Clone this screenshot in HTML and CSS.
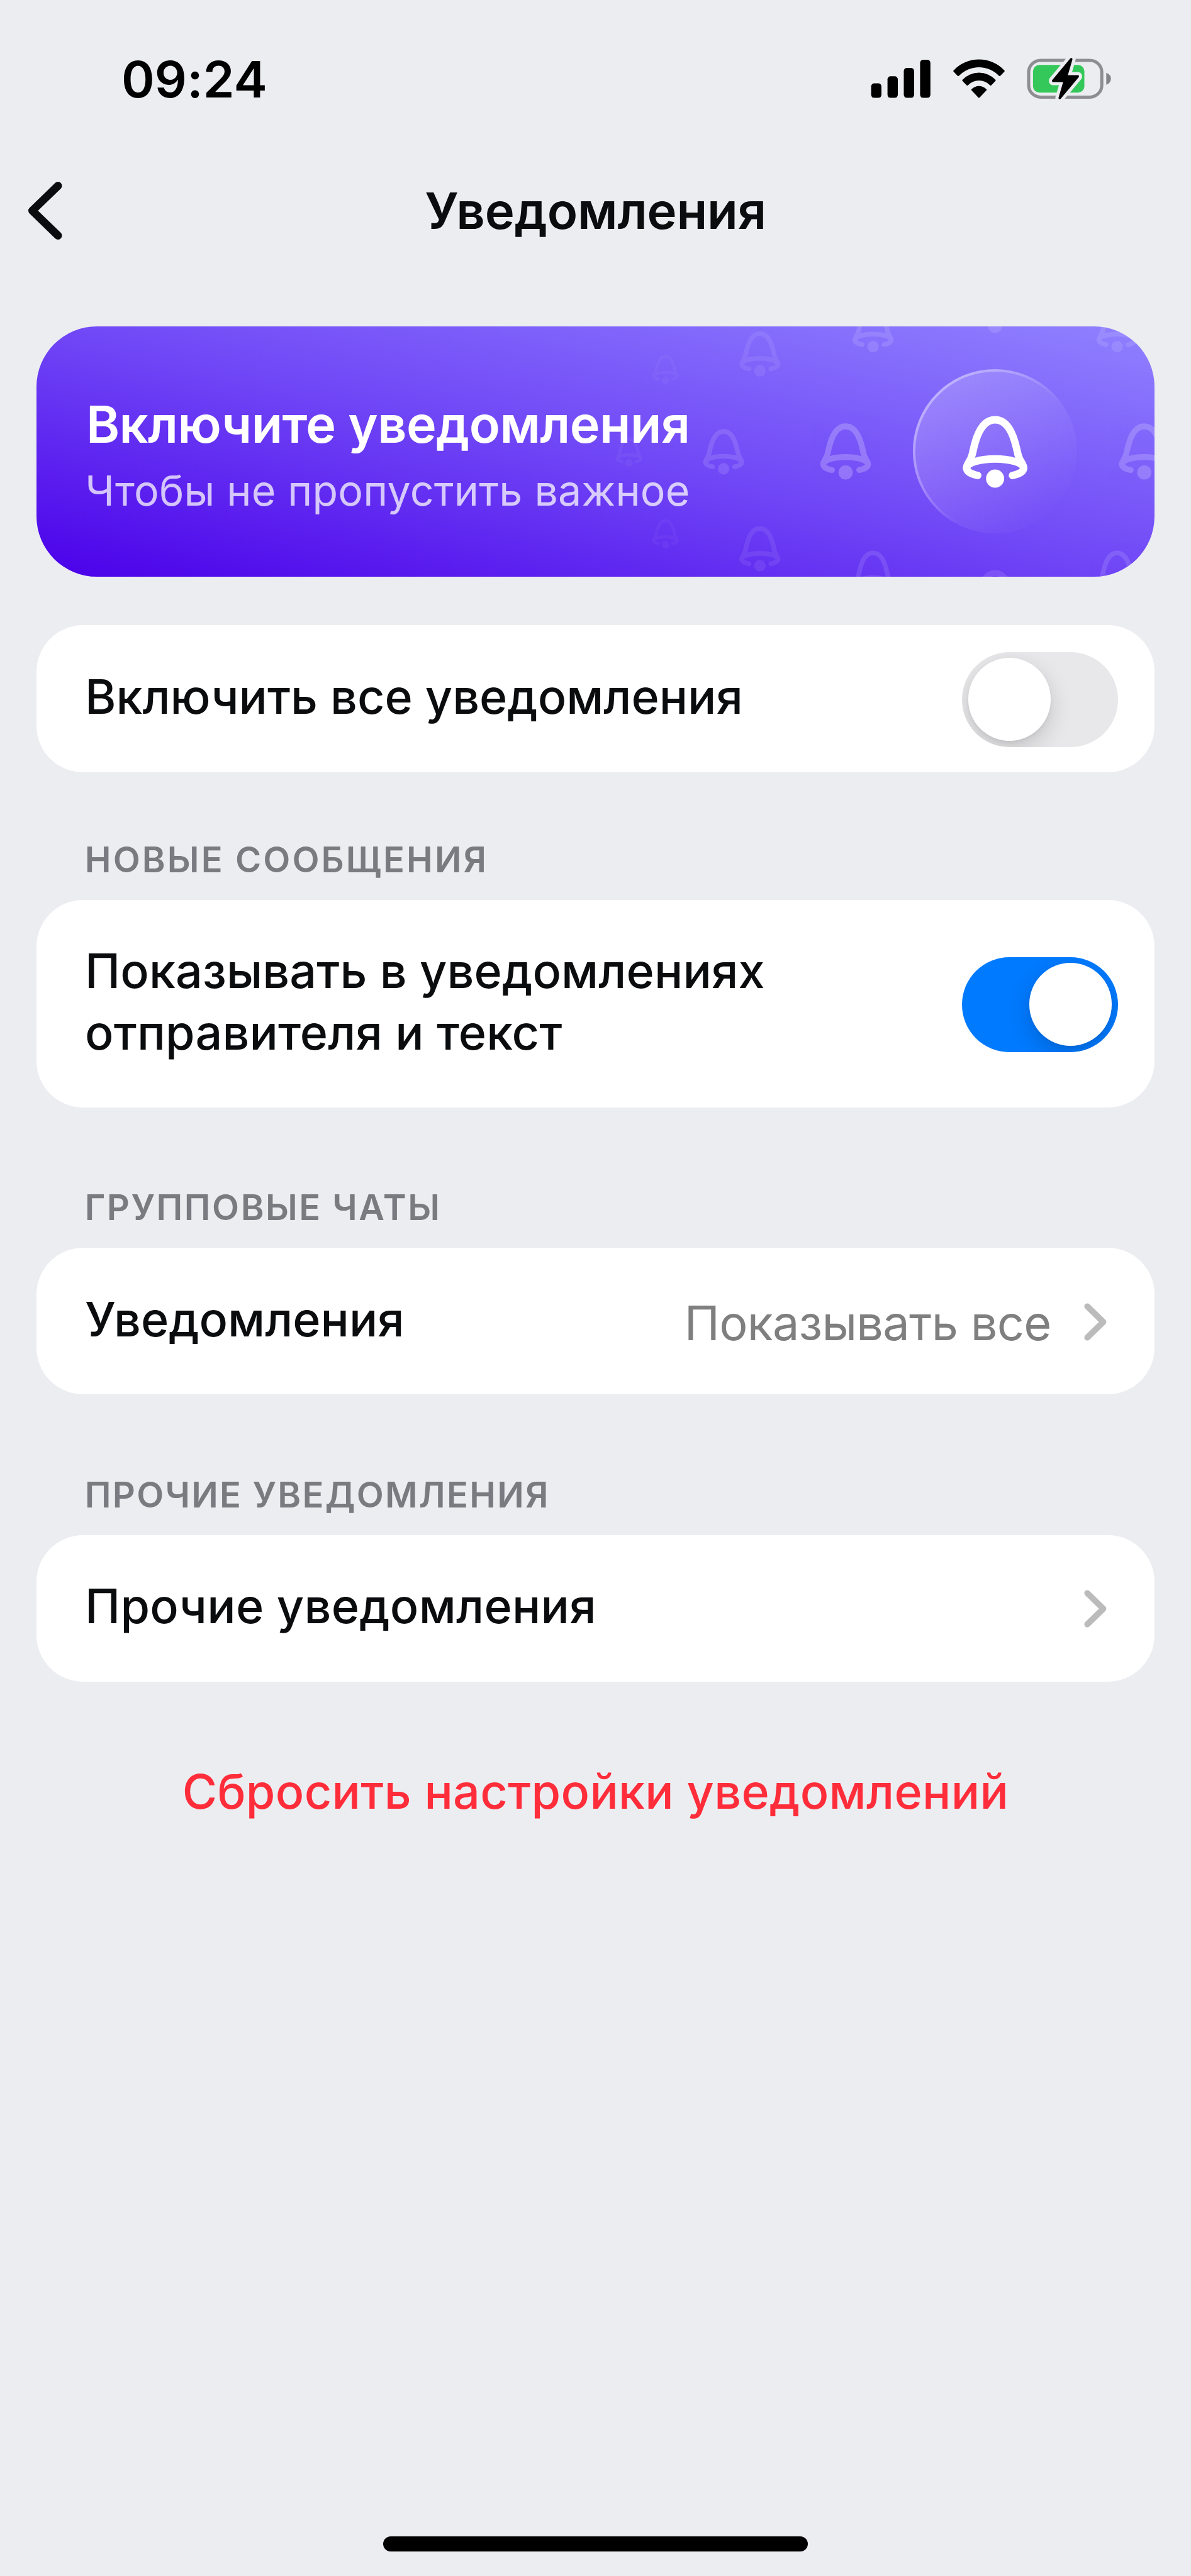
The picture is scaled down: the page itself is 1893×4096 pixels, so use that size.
FILE: index.html
```html
<!DOCTYPE html>
<html lang="ru">
<head>
<meta charset="utf-8">
<title>Уведомления</title>
<link rel="stylesheet" href="styles.css">
</head>
<body>
<div class="screen">
  <header class="status">
    <time class="status-time">09:24</time>
    <div class="status-icons">
      <svg class="icon-signal" width="95" height="62" viewBox="1384 94 95 62">
        <rect x="1384.6" y="132.5" width="16.4" height="23.1" rx="5"/>
        <rect x="1410.6" y="121.3" width="16.4" height="34.3" rx="5"/>
        <rect x="1436.5" y="108.1" width="16.4" height="47.5" rx="5"/>
        <rect x="1462.4" y="95" width="16.4" height="60.6" rx="5"/>
      </svg>
      <svg class="icon-wifi" width="82" height="62" viewBox="1514.7 94 82 62">
        <path d="M1515.4 111.9A55.2 55.2 0 0 1 1596 111.9Q1597 113 1596 114.1L1589.7 120.5Q1588.6 121.5 1587.4 120.5A44 44 0 0 0 1524 120.5Q1522.8 121.5 1521.7 120.5L1515.4 114.1Q1514.4 113 1515.4 111.9Z"/>
        <path d="M1529.5 126.7A36.5 36.5 0 0 1 1581.9 126.7Q1582.9 127.8 1581.9 128.8L1575.4 135.4Q1574.3 136.4 1573.2 135.4A24.5 24.5 0 0 0 1538.2 135.4Q1537.1 136.4 1536 135.4L1529.5 128.8Q1528.5 127.8 1529.5 126.7Z"/>
        <path d="M1543.9 141.8A16.5 16.5 0 0 1 1567.5 141.8Q1568.5 142.8 1567.5 143.8L1556.8 155Q1555.7 156 1554.6 155L1543.9 143.8Q1542.9 142.8 1543.9 141.8Z"/>
      </svg>
      <svg class="icon-battery" width="134" height="68" viewBox="1632 91 134 68">
        <rect class="battery-shell" x="1635" y="96" width="116.2" height="58.4" rx="19"/>
        <rect class="battery-level" x="1641.9" y="103.3" width="81.6" height="43.9" rx="10"/>
        <path class="battery-nub" d="M1758.3 115.7Q1765.8 118.5 1765.8 125.3Q1765.8 132 1758.3 134.8Z"/>
        <path class="bolt-gap" d="M1702.6 94.2L1674 128.6H1692.4L1684.4 155.8L1713 121.4H1694.6Z"/>
        <path class="bolt" d="M1702.6 94.2L1674 128.6H1692.4L1684.4 155.8L1713 121.4H1694.6Z"/>
      </svg>
    </div>
  </header>

  <nav class="nav">
    <svg class="back" width="60" height="100" viewBox="0 0 60 100">
      <path d="M52.2 10.4L11.3 50L52.2 89.6"/>
    </svg>
    <h1 class="nav-title">Уведомления</h1>
  </nav>

  <main class="content">
    <section class="banner">
      <svg class="banner-art" viewBox="58 519 1777 398" preserveAspectRatio="none">
        <defs>
          <g id="bell">
            <path d="M-45.3 83C-45.3 75 -39.5 74 -36.3 61C-32 40 -24 6 0 6C24 6 32 40 36.3 61C39.5 74 45.3 75 45.3 83"/>
            <path d="M-27.6 94.6C-38 92.5 -45.3 88.5 -45.3 82.5C-45.3 74 -22 68.3 0 68.3C22 68.3 45.3 74 45.3 82.5C45.3 88.5 38 92.5 27.6 94.6"/>
            <circle cx="0" cy="99.6" r="14.4"/>
          </g>
          <linearGradient id="disc" x1="0.1" y1="0.15" x2="0.9" y2="0.85">
            <stop offset="0" stop-color="#fff" stop-opacity="0.2"/>
            <stop offset="1" stop-color="#fff" stop-opacity="0"/>
          </linearGradient>
          <linearGradient id="rim" x1="0.1" y1="0.15" x2="0.75" y2="0.7">
            <stop offset="0" stop-color="#fff" stop-opacity="0.38"/>
            <stop offset="0.35" stop-color="#fff" stop-opacity="0.24"/>
            <stop offset="0.75" stop-color="#fff" stop-opacity="0"/>
          </linearGradient>
        </defs>
        <use class="bell" href="#bell" transform="translate(1058.1 564) scale(.41)" opacity=".035"/>
        <use class="bell" href="#bell" transform="translate(1000.2 695.4) scale(.41)" opacity=".045"/>
        <use class="bell" href="#bell" transform="translate(1058.1 825.6) scale(.41)" opacity=".035"/>
        <use class="bell" href="#bell" transform="translate(1208.3 526.6) scale(.634)" opacity=".08"/>
        <use class="bell" href="#bell" transform="translate(1150.6 682.4) scale(.634)" opacity=".12"/>
        <use class="bell" href="#bell" transform="translate(1208.3 836.8) scale(.634)" opacity=".08"/>
        <use class="bell" href="#bell" transform="translate(1388.3 488) scale(.634)" opacity=".12"/>
        <use class="bell" href="#bell" transform="translate(1344.6 673.3) scale(.785)" opacity=".22"/>
        <use class="bell" href="#bell" transform="translate(1388.3 875.6) scale(.634)" opacity=".11"/>
        <use class="bell" href="#bell" transform="translate(1582.3 440) scale(.785)" opacity=".12"/>
        <use class="bell" href="#bell" transform="translate(1582.3 906.4) scale(.785)" opacity=".11"/>
        <use class="bell" href="#bell" transform="translate(1776.3 488) scale(.634)" opacity=".11"/>
        <use class="bell" href="#bell" transform="translate(1819.6 673.3) scale(.785)" opacity=".19"/>
        <use class="bell" href="#bell" transform="translate(1776.3 875.6) scale(.634)" opacity=".12"/>
        <circle cx="1582.1" cy="717.6" r="130.6" fill="url(#disc)"/>
        <circle cx="1582.1" cy="717.6" r="128.6" fill="none" stroke="url(#rim)" stroke-width="4"/>
        <use class="bell" href="#bell" transform="translate(1582.3 661.6)"/>
      </svg>
      <h2 class="banner-title">Включите уведомления</h2>
      <p class="banner-text">Чтобы не пропустить важное</p>
    </section>

    <section class="card card-first">
      <span class="label">Включить все уведомления</span>
      <span class="toggle"><span class="knob"></span></span>
    </section>

    <h3 class="caption caption-new">НОВЫЕ СООБЩЕНИЯ</h3>
    <section class="card card-tall">
      <span class="label label-wide">Показывать в уведомлениях<br>отправителя и текст</span>
      <span class="toggle toggle-on"><span class="knob"></span></span>
    </section>

    <h3 class="caption caption-group">ГРУППОВЫЕ ЧАТЫ</h3>
    <section class="card card-link">
      <span class="label">Уведомления</span>
      <span class="value">Показывать все</span>
      <svg class="chevron" width="36" height="60" viewBox="0 0 36 60"><path d="M5.2 5.2L30.6 30L5.2 54.8"/></svg>
    </section>

    <h3 class="caption caption-other">ПРОЧИЕ УВЕДОМЛЕНИЯ</h3>
    <section class="card card-link">
      <span class="label label-other">Прочие уведомления</span>
      <svg class="chevron" width="36" height="60" viewBox="0 0 36 60"><path d="M5.2 5.2L30.6 30L5.2 54.8"/></svg>
    </section>

    <p class="reset">Сбросить настройки уведомлений</p>
  </main>

  <div class="home-indicator"></div>
</div>
</body>
</html>
```
FILE: styles.css
```css
* { box-sizing: border-box; }

body {
  margin: 0;
  background: #ecedf1;
  color: #0b0c0e;
  font-family: Inter, "Liberation Sans", sans-serif;
}

h1, h2, h3, p { margin: 0; }
svg { display: block; flex: none; }

.screen {
  display: flex;
  flex-direction: column;
  width: 1893px;
  height: 4096px;
  overflow: hidden;
}

/* Status bar */
.status {
  display: flex;
  align-items: center;
  justify-content: space-between;
  height: 252px;
  flex: none;
  padding: 0 127px 0 193px;
}
.status-time {
  font-size: 80px;
  font-weight: 600;
  line-height: 96px;
  letter-spacing: 0.1px;
  color: #000;
}
.status-icons {
  display: flex;
  align-items: center;
  margin-top: -2px;
}
.icon-wifi { margin-left: 35.7px; }
.icon-battery { margin-left: 35.3px; }
.battery-shell { fill: none; stroke: #8e8e92; stroke-width: 5; }
.battery-level { fill: #34c759; }
.battery-nub { fill: #848488; }
.bolt-gap { fill: #ecedf1; stroke: #ecedf1; stroke-width: 14; stroke-linejoin: round; }
.bolt { fill: #000; stroke: #000; stroke-width: 4; stroke-linejoin: round; }

/* Navigation bar */
.nav {
  display: grid;
  grid-template-columns: 120px 1fr 120px;
  align-items: center;
  height: 165px;
  flex: none;
}
.back {
  margin-left: 40px;
  fill: none;
  stroke: #0b0c0e;
  stroke-width: 12.6;
  stroke-linecap: round;
  stroke-linejoin: round;
}
.nav-title {
  text-align: center;
  font-size: 79.7px;
  font-weight: 600;
  line-height: 96px;
  letter-spacing: -0.2px;
}

.content {
  display: flex;
  flex-direction: column;
  flex: 1;
  padding: 102.2px 58.4px 0;
}

/* Banner */
.banner {
  position: relative;
  height: 397.7px;
  padding: 105.4px 0 0 77px;
  border-radius: 96px;
  overflow: hidden;
  background: linear-gradient(to top right, #4a00e9 0%, #7047f6 50%, #9082ff 100%);
  color: #fff;
}
.banner-art {
  position: absolute;
  inset: 0;
  width: 100%;
  height: 100%;
}
.bell {
  fill: none;
  stroke: #fff;
  stroke-width: 11.8;
  stroke-linecap: round;
}
.bell circle, #bell circle { fill: #fff; stroke: none; }
.banner-title {
  position: relative;
  margin-left: 1.5px;
  font-size: 80.8px;
  font-weight: 600;
  line-height: 100px;
  letter-spacing: -0.53px;
}
.banner-text {
  position: relative;
  margin-top: 13.8px;
  font-size: 66.3px;
  line-height: 84px;
  letter-spacing: 0.2px;
  color: rgba(255, 255, 255, 0.74);
}

/* Cards */
.card {
  display: flex;
  align-items: center;
  height: 233.2px;
  flex: none;
  padding: 0 58px 0 76.6px;
  border-radius: 74px;
  background: #fff;
}
.card-first { margin-top: 77.6px; }
.card-tall { height: 330.4px; }
.card-link { padding-right: 76px; }

.label {
  flex: 1;
  margin-bottom: 6px;
  font-size: 75.4px;
  font-weight: 500;
  line-height: 97.7px;
}
.label-wide { letter-spacing: 0.13px; }
.label-other { letter-spacing: 0.28px; }

.value {
  margin: 5.6px 52px 0 0;
  font-size: 75.6px;
  line-height: 97.7px;
  letter-spacing: -0.72px;
  color: #7f7f7f;
}

.chevron {
  margin-top: 2px;
  fill: none;
  stroke: #bbb;
  stroke-width: 9.6;
  stroke-linecap: round;
  stroke-linejoin: round;
}

.caption {
  margin: 0 0 29.6px 76.4px;
  font-size: 56px;
  font-weight: 600;
  line-height: 68px;
  color: #7a7b80;
}
.caption-new { margin-top: 105.6px; letter-spacing: 3.1px; }
.caption-group { margin-top: 125.2px; letter-spacing: 2.5px; }
.caption-other { margin-top: 125.8px; letter-spacing: 2.25px; }

/* Switches */
.toggle {
  display: flex;
  align-items: center;
  width: 247.4px;
  height: 151px;
  margin-top: 2px;
  padding: 0 9.5px;
  border-radius: 76px;
  background: #e8e8ea;
  overflow: hidden;
  flex: none;
}
.toggle-on { justify-content: flex-end; background: #007aff; }
.knob {
  width: 131.4px;
  height: 131.4px;
  border-radius: 50%;
  background: #fff;
  box-shadow: 0 13px 36px rgba(0, 0, 0, 0.16), 0 3px 6px rgba(0, 0, 0, 0.05);
}

.reset {
  margin-top: 130px;
  text-align: center;
  font-size: 75.4px;
  font-weight: 500;
  line-height: 90px;
  letter-spacing: 0.34px;
  color: #ff2d3a;
}

.home-indicator {
  align-self: center;
  width: 675px;
  height: 24px;
  margin-bottom: 39px;
  border-radius: 12px;
  background: #000;
  flex: none;
}
```
